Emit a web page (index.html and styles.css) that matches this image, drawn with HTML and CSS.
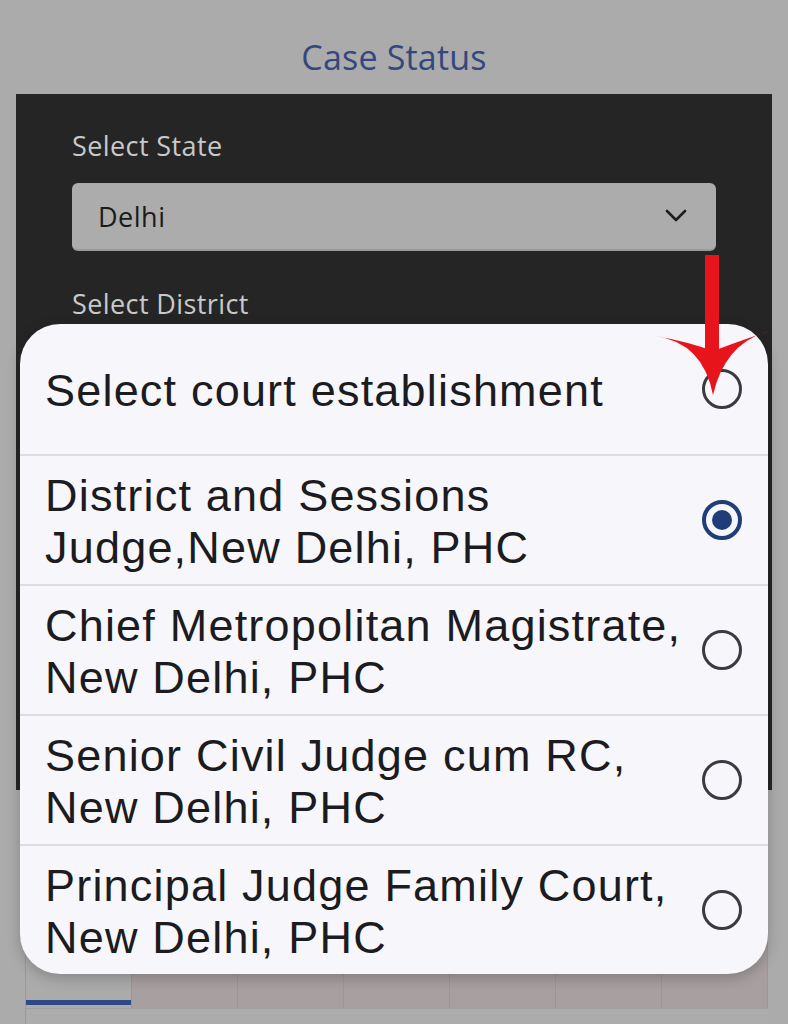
FILE: index.html
```html
<!DOCTYPE html>
<html lang="en">
<head>
<meta charset="utf-8">
<title>Case Status</title>
<link rel="stylesheet" href="styles.css">
</head>
<body>
<div class="page">
  <header class="header">
    <h1 class="title">Case Status</h1>
  </header>
  <section class="panel">
    <label class="label">Select State</label>
    <div class="select">
      <span class="select-value">Delhi</span>
      <svg class="chevron" width="24" height="16" viewBox="0 0 24 16"><path d="M3 3 L12 12 L21 3" fill="none" stroke="#1e1e1e" stroke-width="2.6" stroke-linecap="round" stroke-linejoin="round"/></svg>
    </div>
    <label class="label label-district">Select District</label>
  </section>
  <nav class="tabs">
    <div class="tab active"></div>
    <div class="tab"></div>
    <div class="tab"></div>
    <div class="tab"></div>
    <div class="tab"></div>
    <div class="tab"></div>
    <div class="tab"></div>
  </nav>
  <div class="tab-body"></div>
</div>

<div class="modal">
  <div class="row">
    <span class="row-text">Select court establishment</span>
    <span class="radio"></span>
  </div>
  <div class="row">
    <span class="row-text">District and Sessions<br>Judge,New Delhi, PHC</span>
    <span class="radio checked"></span>
  </div>
  <div class="row">
    <span class="row-text">Chief Metropolitan Magistrate,<br>New Delhi, PHC</span>
    <span class="radio"></span>
  </div>
  <div class="row">
    <span class="row-text">Senior Civil Judge cum RC,<br>New Delhi, PHC</span>
    <span class="radio"></span>
  </div>
  <div class="row">
    <span class="row-text">Principal Judge Family Court,<br>New Delhi, PHC</span>
    <span class="radio"></span>
  </div>
</div>

<svg class="arrow" width="788" height="420" viewBox="0 0 788 420">
  <rect x="705" y="255" width="14" height="100" fill="#e8141b"/>
  <path d="M656 336 Q703 343 713 395 Q725 343 769 331 Q737 342 713 351 Q689 342 656 336 Z" fill="#e8141b"/>
</svg>
</body>
</html>
```

FILE: styles.css
```css
html, body {
  margin: 0;
  padding: 0;
}

body {
  background: #ababab;
  width: 788px;
  height: 1024px;
  overflow: hidden;
  position: relative;
  font-family: "Open Sans", "Liberation Sans", sans-serif;
}

.page {
  display: flex;
  flex-direction: column;
}

.header {
  height: 94px;
  display: flex;
  justify-content: center;
  align-items: flex-start;
}

.title {
  margin: 37px 0 0;
  font-size: 34px;
  font-weight: 400;
  line-height: 40px;
  color: #33487d;
  letter-spacing: 0.2px;
}

.panel {
  margin: 0 16px;
  height: 696px;
  background: #252525;
  padding: 34px 56px 0;
  box-sizing: border-box;
  display: flex;
  flex-direction: column;
}

.label {
  font-size: 27px;
  line-height: 36px;
  color: #c9c9c9;
  letter-spacing: 0.4px;
}

.select {
  margin-top: 19px;
  height: 68px;
  border-radius: 6px;
  background: #acacac;
  border-bottom: 2px solid #9a9a9a;
  box-sizing: border-box;
  display: flex;
  align-items: center;
  justify-content: space-between;
  padding: 0 28px 0 26px;
}

.select-value {
  font-size: 27px;
  color: #1a1a1a;
  letter-spacing: 0.5px;
}

.chevron {
  display: block;
}

.label-district {
  margin-top: 35px;
}

.tabs {
  margin: 150px 20px 0 25px;
  height: 68px;
  display: grid;
  grid-template-columns: repeat(7, 1fr);
  background: #a79fa0;
  border-left: 1px solid #9a9a9a;
}

.tab {
  border-right: 1px solid #9c9697;
  position: relative;
}

.tab.active {
  background: #ababab;
}

.tab.active::after {
  content: "";
  position: absolute;
  left: 0;
  right: 0;
  bottom: 3px;
  height: 5px;
  background: #2d4a86;
}

.tab-body {
  margin: 0 20px 0 25px;
  height: 30px;
  border-left: 1px solid #9a9a9a;
  border-top: 1px solid #a0a0a0;
  background: #acacac;
}

.modal {
  position: absolute;
  left: 20px;
  top: 324px;
  width: 748px;
  height: 650px;
  background: #f6f6fb;
  border-radius: 40px;
  box-shadow: 0 4px 14px rgba(0, 0, 0, 0.22);
  overflow: hidden;
  display: flex;
  flex-direction: column;
}

.row {
  height: 130px;
  box-sizing: border-box;
  display: flex;
  align-items: center;
  justify-content: space-between;
  padding: 4px 26px 0 25px;
}

.row + .row {
  border-top: 2px solid #dcdce2;
}

.row-text {
  font-family: "Liberation Sans", Arial, sans-serif;
  font-size: 45px;
  line-height: 52px;
  color: #1b1b20;
  letter-spacing: 1.2px;
}

.radio {
  flex: none;
  width: 40px;
  height: 40px;
  margin-top: -4px;
  border: 3px solid #3a3a41;
  border-radius: 50%;
  box-sizing: border-box;
  position: relative;
}

.radio.checked {
  border: 4px solid #1f3e79;
}

.radio.checked::after {
  content: "";
  position: absolute;
  left: 6px;
  top: 6px;
  width: 20px;
  height: 20px;
  border-radius: 50%;
  background: #1f3e79;
}

.arrow {
  position: absolute;
  left: 0;
  top: 0;
  pointer-events: none;
}
```
